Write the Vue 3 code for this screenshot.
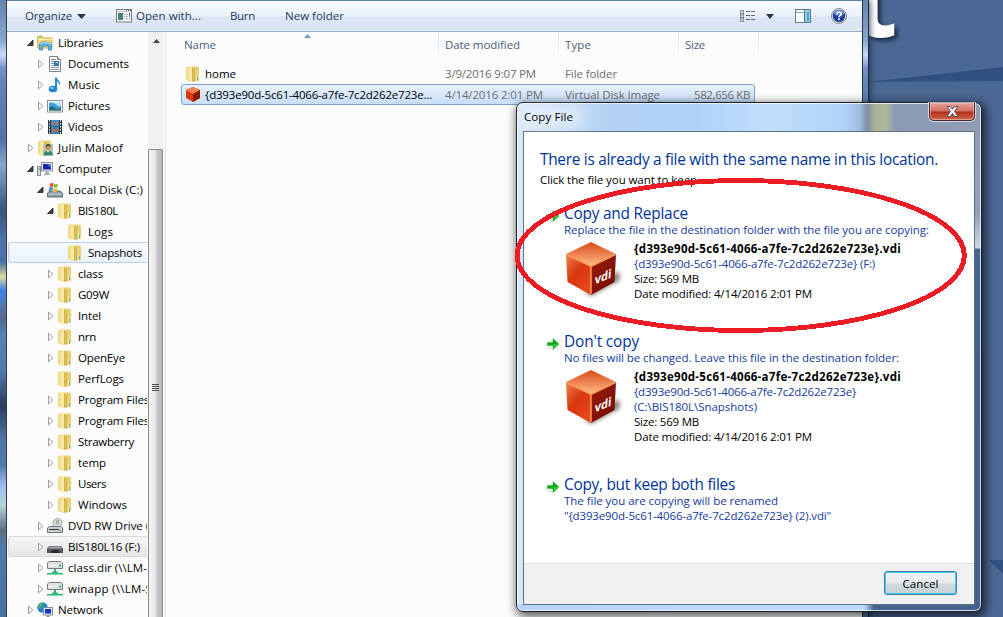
<script setup>
// Spreads the letters of a label so that it fills the given width.
const vFit = {
  mounted(el, { value }) {
    const natural = el.getBoundingClientRect().width
    const count = el.textContent.trim().length
    if (natural && count) el.style.letterSpacing = `${(value - natural) / count}px`
  }
}

const tree = [
  { label: 'Libraries', w: 45, level: 0, arrow: 'open', icon: 'library' },
  { label: 'Documents', w: 61, level: 1, arrow: 'closed', icon: 'document' },
  { label: 'Music', w: 32, level: 1, arrow: 'closed', icon: 'music' },
  { label: 'Pictures', w: 42, level: 1, arrow: 'closed', icon: 'picture' },
  { label: 'Videos', w: 35, level: 1, arrow: 'closed', icon: 'video' },
  { label: 'Julin Maloof', w: 65, level: 0, arrow: 'closed', icon: 'user' },
  { label: 'Computer', w: 54, level: 0, arrow: 'open', icon: 'computer' },
  { label: 'Local Disk (C:)', w: 75, level: 1, arrow: 'open', icon: 'disk' },
  { label: 'BIS180L', w: 40, level: 2, arrow: 'open', icon: 'folder' },
  { label: 'Logs', w: 25, level: 3, icon: 'folder' },
  { label: 'Snapshots', w: 54, level: 3, icon: 'folder', state: 'picked' },
  { label: 'class', w: 25, level: 2, arrow: 'closed', icon: 'folder' },
  { label: 'G09W', w: 31, level: 2, arrow: 'closed', icon: 'folder' },
  { label: 'Intel', w: 23, level: 2, arrow: 'closed', icon: 'folder' },
  { label: 'nrn', w: 18, level: 2, arrow: 'closed', icon: 'folder' },
  { label: 'OpenEye', w: 47, level: 2, arrow: 'closed', icon: 'folder' },
  { label: 'PerfLogs', w: 46, level: 2, icon: 'folder' },
  { label: 'Program Files', w: 71, level: 2, arrow: 'closed', icon: 'folder' },
  { label: 'Program Files', w: 71, level: 2, arrow: 'closed', icon: 'folder' },
  { label: 'Strawberry', w: 56, level: 2, arrow: 'closed', icon: 'folder' },
  { label: 'temp', w: 28, level: 2, arrow: 'closed', icon: 'folder' },
  { label: 'Users', w: 28, level: 2, arrow: 'closed', icon: 'folder' },
  { label: 'Windows', w: 49, level: 2, arrow: 'closed', icon: 'folder' },
  { label: 'DVD RW Drive (', w: 81, level: 1, arrow: 'closed', icon: 'dvd' },
  { label: 'BIS180L16 (F:)', w: 72, level: 1, arrow: 'closed', icon: 'usb', state: 'dim' },
  { label: 'class.dir (\\\\LM-', w: 79, level: 1, arrow: 'closed', icon: 'netdrive' },
  { label: 'winapp (\\\\LM-S', w: 84, level: 1, arrow: 'closed', icon: 'netdrive' },
  { label: 'Network', w: 45, level: 0, arrow: 'closed', icon: 'network' }
]

const guid = '{d393e90d-5c61-4066-a7fe-7c2d262e723e}'
const options = [
  {
    title: 'Copy and Replace', w: 124,
    notes: [{ t: 'Replace the file in the destination folder with the file you are copying:', w: 365 }],
    file: { path: [{ t: guid + ' (F:)', w: 241 }] }
  },
  {
    title: "Don't copy", w: 75,
    notes: [{ t: 'No files will be changed. Leave this file in the destination folder:', w: 335 }],
    file: { path: [{ t: guid, w: 222 }, { t: '(C:\\BIS180L\\Snapshots)', w: 123 }] }
  },
  {
    title: 'Copy, but keep both files', w: 171,
    notes: [{ t: 'The file you are copying will be renamed', w: 214 }, { t: '"' + guid + ' (2).vdi"', w: 267 }]
  }
]
</script>

<template>
  <div class="desktop">
    <svg class="wallpaper" width="1003" height="617">
      <polygon points="868,82 1003,67 1003,81" fill="#305083" />
      <polygon points="989,560 1003,560 1003,574" fill="#305083" />
    </svg>
    <div class="wall-letter">t</div>

    <section class="explorer">
      <header class="toolbar">
        <span class="tb organize"><span v-fit="47">Organize</span></span>
        <svg class="caret" width="9" height="5"><path d="M0 0h9L4.500 5z" fill="#1e395b" /></svg>
        <svg class="openicon" width="16" height="14">
          <rect x=".5" y=".5" width="15" height="12.500" fill="#f4f4f4" stroke="#7d7d7d" />
          <path d="M1 2.500h14" stroke="#c9c9c9" /><path d="M10 1.500h1m1 0h1m1 0h1" stroke="#555" />
          <rect x="2" y="4" width="5" height="7" fill="#3f7d94" /><rect x="2" y="4" width="2.500" height="7" fill="#4d8a5d" />
          <path d="M8 5.500h4M8 7.500h4M8 9.500h4" stroke="#bdbdbd" /><path d="M13.500 4v4m0 1v1" stroke="#4677a8" />
        </svg>
        <span class="tb openwith"><span v-fit="65">Open with...</span></span>
        <span class="tb burn"><span v-fit="25">Burn</span></span>
        <span class="tb"><span v-fit="59">New folder</span></span>
        <span class="spacer"></span>
        <svg class="viewicon" width="16" height="13">
          <g fill="#fff" stroke="#8795a6"><rect x=".5" y=".5" width="3" height="3" /><rect x=".5" y="4.500" width="3" height="3" /><rect x=".5" y="8.500" width="3" height="3" /></g>
          <path d="M1.500 2h1" stroke="#4476b0" /><path d="M1.500 6h1" stroke="#d33" /><path d="M1.500 10h1" stroke="#4476b0" />
          <path d="M6 1.500h4m1 0h4M6 5.500h4m1 0h4M6 9.500h4m1 0h4" stroke="#53677f" />
        </svg>
        <svg class="caret2" width="8" height="5"><path d="M0 0h8L4 5z" fill="#1e395b" /></svg>
        <svg class="previewicon" width="16" height="14">
          <rect x=".5" y=".5" width="15" height="13" fill="#fff" stroke="#5d7795" />
          <path d="M1 3.500h9" stroke="#8fa6bf" /><rect x="10" y="1" width="5" height="12" fill="#8bd0e4" /><rect x="12" y="3" width="2" height="9" fill="#55aacb" /><path d="M9.500 1v12" stroke="#5d7795" />
        </svg>
        <svg class="helpicon" width="16" height="16">
          <circle cx="8" cy="8" r="7.500" fill="#e8e8ea" stroke="#85888d" /><circle cx="8" cy="8" r="6.200" fill="#1d3fa5" /><ellipse cx="8" cy="5" rx="5" ry="3" fill="#5f86d8" />
          <path d="M5.800 6.200c0-2.900 4.400-2.800 4.400-.3 0 1.700-2.100 1.700-2.100 3.300" fill="none" stroke="#fff" stroke-width="1.700" /><rect x="7.200" y="10.300" width="1.800" height="1.800" fill="#fff" />
        </svg>
      </header>

      <div class="body">
        <nav class="tree">
          <div v-for="(n, i) in tree" :key="i" class="node" :class="['lv' + n.level, n.state]">
            <svg class="twist" width="8" height="10">
              <path v-if="n.arrow === 'closed'" d="M1.500 1.200v7.600L5.800 5z" fill="#fff" stroke="#9a9a9a" />
              <path v-else-if="n.arrow === 'open'" d="M6 2v5.500H.5z" fill="#404040" stroke="#222" stroke-width=".8" />
            </svg>
            <svg class="ico" width="16" height="16" viewBox="0 0 16 16">
              <g v-if="n.icon === 'folder' || n.icon === 'user'" transform="translate(1 0)">
                <path d="M0 2Q0 .5 1.500 .5H6v15H3L0 14z" fill="#efdb86" /><path d="M6 .5h5.500q1.500 0 1.500 1.500v12.500L7 15.500z" fill="#e6cf74" />
                <path d="M2.500 2.500l3.500-2v15l-3.500-1z" fill="#f8eaa6" /><path d="M6 1.500l3 1.500v12.500H6z" fill="#d2b347" /><path d="M7.500 3v11" stroke="#e0c45c" />
                <path d="M10.500 9v5" stroke="#f4e7a4" /><path v-if="n.icon === 'folder'" d="M11.500 11v3.500" stroke="#65b5b5" />
                <g v-if="n.icon === 'user'" transform="translate(-1 0)"><rect x="6" y="4" width="10" height="11" fill="#b7c9a8" /><circle cx="11" cy="7.500" r="2.600" fill="#c58e68" /><path d="M8.500 7q0-3 3-3 2.500 0 2.200 3l-2-1.200z" fill="#58402c" /><path d="M6.500 15.500q0-5 4.500-5t5 5z" fill="#3d8876" /><path d="M9.500 10.500l1.500 2 1.500-2z" fill="#fff" /></g>
              </g>
              <g v-else-if="n.icon === 'library'">
                <path d="M.5 3V1.500h5L7 3h8v10H.5z" fill="#f0d77c" stroke="#d4b552" /><path d="M1 4.500h14" stroke="#fff3b8" /><path d="M2 1.500h3" stroke="#7dbb53" stroke-width="1.500" />
                <path d="M2.500 15V9.500Q2.500 7 8 7t6.500 2.500V15h-3v-4h-6v4z" fill="#62b3df" stroke="#3d8fc5" /><path d="M3 9q2-1.500 5-1.500T14 9" stroke="#b9e7fa" fill="none" />
              </g>
              <g v-else-if="n.icon === 'document'" transform="translate(1 0)">
                <path d="M1.500.5h8l3 3v12h-11z" fill="#fff" stroke="#7d8389" /><path d="M9.500.5v3h3" fill="#ddd" stroke="#7d8389" />
                <path d="M3 3.500h5M3 5.500h3M3 7.500h3M3 9.500h3M3 11.500h8M3 13.500h8" stroke="#8394a6" /><rect x="6" y="5" width="5" height="5" fill="#3476ac" /><path d="M7 6h3v2z" fill="#92c7ed" />
              </g>
              <g v-else-if="n.icon === 'music'">
                <ellipse cx="6" cy="12" rx="4.300" ry="3.300" fill="#2285cc" /><path d="M8 12V.5h2c0 3 4.500 3.500 2.800 8C12.500 6 11 5 10 5v7z" fill="#258dd2" /><ellipse cx="5" cy="11" rx="2" ry="1" fill="#7fcaf4" />
              </g>
              <g v-else-if="n.icon === 'picture'">
                <rect x=".5" y="2.500" width="15" height="11.500" fill="#fff" stroke="#8a8f95" /><rect x="2" y="4" width="12" height="8.500" fill="#3f9ed5" /><path d="M2 5q5-1 7 1.500T14 8V4H2z" fill="#b5e3f5" /><path d="M2 10q3-3 6 0t6-1v3.500H2z" fill="#1c5f86" /><path d="M2 11.500h12v1H2z" fill="#4f9b61" />
              </g>
              <g v-else-if="n.icon === 'video'">
                <rect x="1" y="1" width="14" height="14" fill="#343b42" /><rect x="4" y="1" width="8" height="6.500" fill="#3f8fc5" /><rect x="4" y="8" width="8" height="7" fill="#3681b5" />
                <path d="M2.500 1v14M13.500 1v14" stroke="#f4f4f4" stroke-dasharray="1.500 1.500" /><path d="M5 2l3 3 3-3v4L8 4 5 6z" fill="#d07245" /><path d="M5 9l3 2 3-2v4l-3-1-3 2z" fill="#c36b47" />
              </g>
              <g v-else-if="n.icon === 'computer'">
                <rect x="4.500" y="1.500" width="11" height="8.500" fill="#ececec" stroke="#8d9299" /><rect x="6" y="3" width="8" height="5.500" fill="#1525b2" /><path d="M10 3h4v4z" fill="#5476e8" /><path d="M8.500 10.500h3v2h2v1.500H7v-1.500h1.500z" fill="#a6abb0" />
                <rect x=".5" y="5.500" width="3" height="9" fill="#d7dadd" stroke="#898e93" /><path d="M2 7v2" stroke="#4aa868" />
              </g>
              <g v-else-if="n.icon === 'disk'">
                <path d="M.5 11l2.500-2h10l2.500 2v4H.5z" fill="#8b9aa5" stroke="#5e6b74" /><path d="M1 11.500h14v1H1z" fill="#cdd7dd" /><rect x="12" y="13" width="2" height="1" fill="#4d7" />
                <path d="M3 1.500q2-1 3.500 0L6 5q-1.500-1-3.500 0z" fill="#e7532b" /><path d="M7 1.800q2 1 4 0L10.500 5q-2 1-4 0z" fill="#85b92e" /><path d="M2.500 5.500q2-1 3.500 0L5 9q-1.500-1-3.500 0z" fill="#3b8dd5" /><path d="M6.300 6q2 1 4 0L9.500 9.500q-2 1-4 0z" fill="#f4c234" />
              </g>
              <g v-else-if="n.icon === 'dvd'">
                <circle cx="10.500" cy="5" r="4.500" fill="#dde2df" stroke="#9ba29f" /><path d="M8 2l2 3 3-3" fill="#98c79c" /><circle cx="10.500" cy="5" r="1.300" fill="#fff" stroke="#888" />
                <path d="M.5 10l2-1.500h11l2 1.500v4.500H.5z" fill="#cfd1d3" stroke="#6f7377" /><path d="M2 11.500h10" stroke="#333" /><rect x="12" y="12" width="2" height="1" fill="#4b4" />
              </g>
              <g v-else-if="n.icon === 'usb'">
                <path d="M0 10q1-3 3-3h10q2 0 3 3v4H0z" fill="#54585c" /><path d="M1 9.500Q2 7.500 4 7.500h8q2 0 3 2z" fill="#a6aaad" /><path d="M3.500 14l2-3h5l2 3z" fill="#25282b" />
              </g>
              <g v-else-if="n.icon === 'netdrive'">
                <path d="M.5 3l1.500-1.500h12L15.500 3v5.500H.500z" fill="#dfe1e3" stroke="#777b7f" /><path d="M2 5.500h8" stroke="#fff" /><rect x="12" y="4.500" width="2" height="2" fill="#3b5" />
                <path d="M7 9h2v3H7z" fill="#38ad7c" /><path d="M0 13h5v-1.500h6V13h5v1.500H0z" fill="#2cba77" /><path d="M5 14.500h6" stroke="#7ed9af" />
              </g>
              <g v-else>
                <circle cx="5.500" cy="5.500" r="5.200" fill="#2384cf" /><path d="M2 2q3-2 4 0L4 5 1 6zM6 6l3 1-2 3z" fill="#55bd55" />
                <rect x="6.500" y="5.500" width="9" height="7.500" fill="#e5e8ec" stroke="#858e9b" /><rect x="8" y="7" width="6" height="4.500" fill="#1830c2" /><path d="M9.500 13.500h3V15h1.500v1H8v-1h1.500z" fill="#868e95" />
              </g>
            </svg>
            <span class="lbl"><span v-fit="n.w">{{ n.label }}</span></span>
          </div>
        </nav>
        <div class="scroll">
          <div class="up"><svg width="7" height="4"><path d="M0 4L3.500 0 7 4z" fill="#444" /></svg></div>
          <div class="thumb"><i></i><i></i><i></i><i></i></div>
        </div>
        <main class="files">
          <div class="row head">
            <span class="c name"><span v-fit="32">Name</span></span>
            <span class="c date"><span v-fit="75">Date modified</span></span>
            <span class="c type"><span v-fit="26">Type</span></span>
            <span class="c size"><span v-fit="20">Size</span></span>
            <svg class="sort" width="7" height="4"><path d="M0 4L3.500 0 7 4z" fill="#6ba0bd" /></svg>
          </div>
          <div class="row">
            <span class="c name file">
              <svg width="16" height="16"><path d="M0 2Q0 .5 1.500 .5H6v15H3L0 14z" fill="#efdb86" /><path d="M6 .5h5.500q1.500 0 1.500 1.500v12.500L7 15.500z" fill="#e6cf74" /><path d="M2.500 2.500l3.500-2v15l-3.500-1z" fill="#f8eaa6" /><path d="M6 1.500l3 1.500v12.500H6z" fill="#d2b347" /><path d="M7.500 3v11" stroke="#e0c45c" /><path d="M10.500 9v5" stroke="#f4e7a4" /><path d="M11.500 11v3.500" stroke="#65b5b5" /></svg>
              <span v-fit="31">home</span>
            </span>
            <span class="c date"><span v-fit="91">3/9/2016 9:07 PM</span></span>
            <span class="c type"><span v-fit="52">File folder</span></span>
            <span class="c size"></span>
          </div>
          <div class="row selected">
            <span class="c name file">
              <svg width="16" height="16"><path d="M7 0L14 3v8L7 15 0 11V3z" fill="#d93a14" /><path d="M7 0l7 3-7 4-7-4z" fill="#f2834f" /><path d="M7 7l7-4v8l-7 4z" fill="#8d1705" /></svg>
              <span v-fit="227">{d393e90d-5c61-4066-a7fe-7c2d262e723e...</span>
            </span>
            <span class="c date"><span v-fit="98">4/14/2016 2:01 PM</span></span>
            <span class="c type"><span v-fit="95">Virtual Disk Image</span></span>
            <span class="c size"><span v-fit="56">582,656 KB</span></span>
          </div>
        </main>
      </div>
    </section>

    <section class="dialog">
      <header class="title"><span class="glow"></span><span v-fit="49" class="caption">Copy File</span>
        <span class="close"><svg width="13" height="11"><path d="M1 .5h3.200l2.300 2.800L8.800.5H12L8.500 5.300 12 10.500H8.800L6.500 7.500l-2.300 3H1l3.500-5.200z" fill="#fff" stroke="#4b4650" stroke-width=".9" /></svg></span>
      </header>
      <div class="client">
        <div class="content">
          <h1><span v-fit="398">There is already a file with the same name in this location.</span></h1>
          <p class="hint"><span v-fit="157">Click the file you want to keep</span></p>
          <article v-for="o in options" :key="o.title" class="option">
            <svg class="arrow" width="16" height="15">
              <ellipse cx="7" cy="9" rx="7" ry="5" fill="#e9eee9" /><path d="M2 6h5.500V1.500L14.500 8l-7 6.500V10H2z" fill="#12a51f" stroke="#fff" stroke-width=".6" /><path d="M3 8.700h6V12l4-4z" fill="#2bd63e" />
            </svg>
            <div class="copy">
              <h2><span v-fit="o.w">{{ o.title }}</span></h2>
              <p v-for="n in o.notes" :key="n.t" class="blue"><span v-fit="n.w">{{ n.t }}</span></p>
              <div v-if="o.file" class="details">
                <svg class="cube" width="60" height="60" viewBox="0 0 60 60">
                  <defs>
                    <linearGradient id="ct" x1="0" y1="0" x2="0" y2="1"><stop offset="0" stop-color="#d9481b" /><stop offset="1" stop-color="#ffbd85" /></linearGradient>
                    <linearGradient id="cl" x1="0" y1="0" x2=".7" y2="1"><stop offset="0" stop-color="#f08350" /><stop offset=".5" stop-color="#d8370f" /><stop offset="1" stop-color="#e9481b" /></linearGradient>
                    <linearGradient id="cr" x1="0" y1="0" x2="1" y2="1"><stop offset="0" stop-color="#9c1c08" /><stop offset="1" stop-color="#6c0c03" /></linearGradient>
                    <filter id="bl"><feGaussianBlur stdDeviation="2.200" /></filter>
                  </defs>
                  <path d="M20 50l7 5 29-16-1-9z" fill="#483c38" opacity=".65" filter="url(#bl)" />
                  <path d="M2 13l25 12v29L3.500 41z" fill="url(#cl)" /><path d="M27 25l25-12-1.500 28L27 54z" fill="url(#cr)" /><path d="M27 1l25 12-25 12L2 13z" fill="url(#ct)" />
                  <path d="M2.500 13.500L27 25.500l24.500-12M27 25.500V53" fill="none" stroke="#ff9a62" stroke-width="1.500" />
                  <text transform="matrix(.88 -.36 -.08 1 30.500 43.500)" class="vdi">vdi</text>
                </svg>
                <div class="lines">
                  <p class="bold"><span v-fit="267">{d393e90d-5c61-4066-a7fe-7c2d262e723e}.vdi</span></p>
                  <p v-for="p in o.file.path" :key="p.t" class="blue"><span v-fit="p.w">{{ p.t }}</span></p>
                  <p><span v-fit="65">Size: 569 MB</span></p>
                  <p><span v-fit="178">Date modified: 4/14/2016 2:01 PM</span></p>
                </div>
              </div>
            </div>
          </article>
        </div>
        <footer class="foot"><button class="cancel"><span v-fit="36">Cancel</span></button></footer>
      </div>
    </section>

    <svg class="marker" width="1003" height="617">
      <ellipse cx="740.700" cy="255.500" rx="223.600" ry="75" fill="none" stroke="#ed1c24" stroke-width="4.800" shape-rendering="crispEdges" />
    </svg>
  </div>
</template>

<style>
html, body { margin: 0; overflow: hidden; }
</style>

<style scoped>
.desktop { position: relative; width: 1003px; height: 617px; overflow: hidden; background: #4b6793; font: 11.5px/15px "Open Sans", "Noto Sans", sans-serif; color: #000; white-space: nowrap; }
p, h1, h2 { margin: 0; font-weight: 400; }
svg { display: block; flex: none; }
.wallpaper, .marker { position: absolute; left: 0; top: 0; }
.wall-letter { position: absolute; left: 852px; top: -68px; font-size: 105px; line-height: 130px; font-weight: 700; color: #fff; text-shadow: 3px 3px 4px #1c2c48; }

.explorer { position: absolute; left: 0; top: 0; width: 869px; height: 617px; box-sizing: border-box; padding: 1px 7px 0 7px; box-shadow: 0 0 7px #13213a;
  background: linear-gradient(#2d3c5c, #2d3c5c) 6px 0 / 1px 100% no-repeat, linear-gradient(#25334c, #25334c) 862px 0 / 1px 100% no-repeat, linear-gradient(#1d2c45, #1d2c45) 868px 0 / 1px 100% no-repeat,
  linear-gradient(#6583ae 0, #88a6cd 40px, #c8dcf8 55px, #7d8fd0 68px, #6685b2 80px, #5273a5 140px, #8ba6ca 165px, #3c5277 210px, #4f74aa 240px, #4c70a5 262px, #ddd99b 277px, #3c84ea 290px, #5578ac 305px, #566987 318px, #5a81b7 335px, #5679ac 370px, #2b3d5e 405px, #5175a6 440px, #5277ad 465px, #a0baf0 485px, #b3d4d7 505px, #626e80 530px, #5578ad 545px, #496e9f 617px); }
.toolbar { display: flex; align-items: center; height: 31px; padding: 0 15px 1px 18px; box-sizing: border-box; width: 855px; color: #1e395b; border-top: 1px solid #f8fbff; border-bottom: 1px solid #93abc9;
  background: linear-gradient(#fafcff 0, #eaf1fb 14px, #dce6f4 15px, #dae5f3 27px, #e7eef8 29px); }
.tb { flex: none; margin-top: -1px; }
.organize { width: 52px; }
.openicon { margin: 0 4px 0 30px; }
.openwith { width: 94px; }
.burn { width: 55px; }
.spacer { flex: 1; }
.caret2 { margin: 0 21px 0 10px; }
.previewicon { margin-right: 20px; }
.body { display: flex; width: 855px; height: 585px; background: #fcfcfc; }
.tree { width: 140px; margin-right: 1px; overflow: hidden; }
.node { display: flex; align-items: center; height: 21px; box-sizing: border-box; margin-left: 1px; border: 1px solid transparent; border-right: 0; }
.lv0 { padding-left: 18px; } .lv1 { padding-left: 28px; } .lv2 { padding-left: 38px; } .lv3 { padding-left: 48px; }
.picked { border-color: #b5d0f3; border-radius: 3px 0 0 3px; background: linear-gradient(#f8fbff, #e9f2fd); }
.dim { border-color: #dadada; border-radius: 3px 0 0 3px; background: linear-gradient(#f6f6f6, #e6e6e6); }
.twist { margin-right: 2px; }
.ico { margin-right: 5px; }
.scroll { width: 15px; height: 585px; background: #f0f0f0; flex: none; display: flex; flex-direction: column; }
.up { height: 117px; flex: none; padding: 7px 0 0 5px; box-sizing: border-box; }
.thumb { flex: 1; box-sizing: border-box; border: 1px solid #8b8b8b; border-bottom: 0; border-radius: 2px 2px 0 0; background: linear-gradient(90deg, #f5f5f5, #e7e7e9 50%, #c9c9cd 60%, #b9b9bd); padding: 234px 0 0 3px; }
.thumb i { display: block; width: 7px; height: 1px; margin-bottom: 1px; background: #4c4c4c; }
.files { margin-left: 2px; border-left: 1px solid #d6e5f5; flex: 1; min-width: 0; }
.row { display: flex; align-items: center; height: 21px; color: #6d6d6d; box-sizing: border-box; margin-left: 15px; width: 574px; border: 1px solid transparent; }
.c { flex: none; box-sizing: border-box; }
.name { width: 256px; padding-left: 2px; }
.date { width: 120px; padding-left: 7px; }
.type { width: 120px; padding-left: 7px; }
.size { width: 76px; text-align: right; padding-right: 4px; }
.file { display: flex; align-items: center; gap: 3px; color: #000; }
.file svg { margin-left: 2px; }
.head { position: relative; height: 21px; margin-bottom: 10px; color: #4c607a; border: 0; padding-left: 1px; align-items: flex-start; width: 578px; }
.head .c { height: 21px; padding-top: 5px; border-right: 1px solid; border-image: linear-gradient(#cfe2f2, #eef5fb) 1; }
.head .name { width: 257px; }
.head .date, .head .type { padding-left: 6px; }
.head .size { text-align: left; padding-left: 6px; width: 80px; }
.sort { position: absolute; left: 123px; top: 2px; }
.selected { border-color: #7da2ce; border-radius: 3px; background: linear-gradient(#e8f1fd, #c7defc); }

.dialog { position: absolute; left: 516px; top: 102px; width: 466px; height: 510px; box-sizing: border-box; border: 1px solid #16202e; border-radius: 7px; padding: 0 6px 6px 7px; box-shadow: inset 0 0 0 1px rgba(255, 255, 255, .75), 2px 3px 10px 2px rgba(0, 0, 0, .62);
  background: linear-gradient(#8e9cb4 0, #93a1b8 110px, #cdd7e6 145px, #45648e 146px, #426089 100%) 457px 0 / 9px 100% no-repeat, linear-gradient(90deg, #b4d4f8 0, #bcdcff 347px, #46648f 357px) 0 501px / 100% 9px no-repeat, linear-gradient(90deg, #d9e8f8 0, #b5d2f4 90px, #afd2fa 180px, #c2dffc 250px, #b1d4f8 325px, #9fbede 343px, #7f8da5 350px, #acb196 358px, #b1b99d 368px, #8b99b3 378px, #8f9db5 100%); }
.title { position: relative; height: 28px; display: flex; align-items: center; }
.glow { position: absolute; left: 0; top: 4px; width: 58px; height: 20px; background: #fff; opacity: .45; filter: blur(6px); }
.caption { position: relative; margin-top: -2px; }
.close { position: absolute; right: 0; top: 0; width: 46px; height: 18px; border: 1px solid #4d2730; border-top: 0; border-radius: 0 0 5px 5px; box-sizing: border-box; display: grid; place-items: center; box-shadow: 0 0 0 1px rgba(255, 255, 255, .6), inset 0 0 0 1px rgba(255, 210, 200, .5); background: linear-gradient(#e5a095 0, #cf6f61 8px, #b2301d 9px, #c8543c 15px, #d98671 18px); }
.client { width: 452px; height: 474px; margin-left: -1px; box-sizing: border-box; border: 1px solid #5d7186; background: #fff; display: flex; flex-direction: column; }
.content { flex: 1; padding: 18px 0 0 16px; }
h1 { font-size: 15.400px; line-height: 20px; color: #003399; height: 20px; }
.hint { margin-top: 2px; height: 15px; }
.option { display: flex; padding-left: 5px; margin-top: 29px; }
.hint + .option { margin-top: 15px; }
.arrow { margin: 6px 3px 0 0; }
h2 { font-size: 15.400px; line-height: 20px; height: 20px; padding-top: 2px; box-sizing: border-box; color: #003399; }
.blue { color: #153a9e; }
.copy p { height: 15px; }
.details { display: flex; margin-top: 4px; }
.cube { margin: 0 10px 0 0; }
.bold { font-weight: 700; }
.vdi { font: 700 12.500px "Open Sans", sans-serif; fill: #fff; }
.foot { height: 41px; flex: none; border-top: 1px solid #dfdfdf; background: #f0f0f0; box-sizing: border-box; display: flex; justify-content: flex-end; padding: 7px 17px 0 0; }
.cancel { width: 73px; height: 24px; box-sizing: border-box; border: 1px solid #3c7fb1; border-radius: 3px; padding: 0; font: inherit; color: #000; box-shadow: inset 0 0 0 1px #48c8ef; background: linear-gradient(#f1f4f5 0, #e5eaec 11px, #d2dadd 12px, #c5d1d6 100%); }
</style>
